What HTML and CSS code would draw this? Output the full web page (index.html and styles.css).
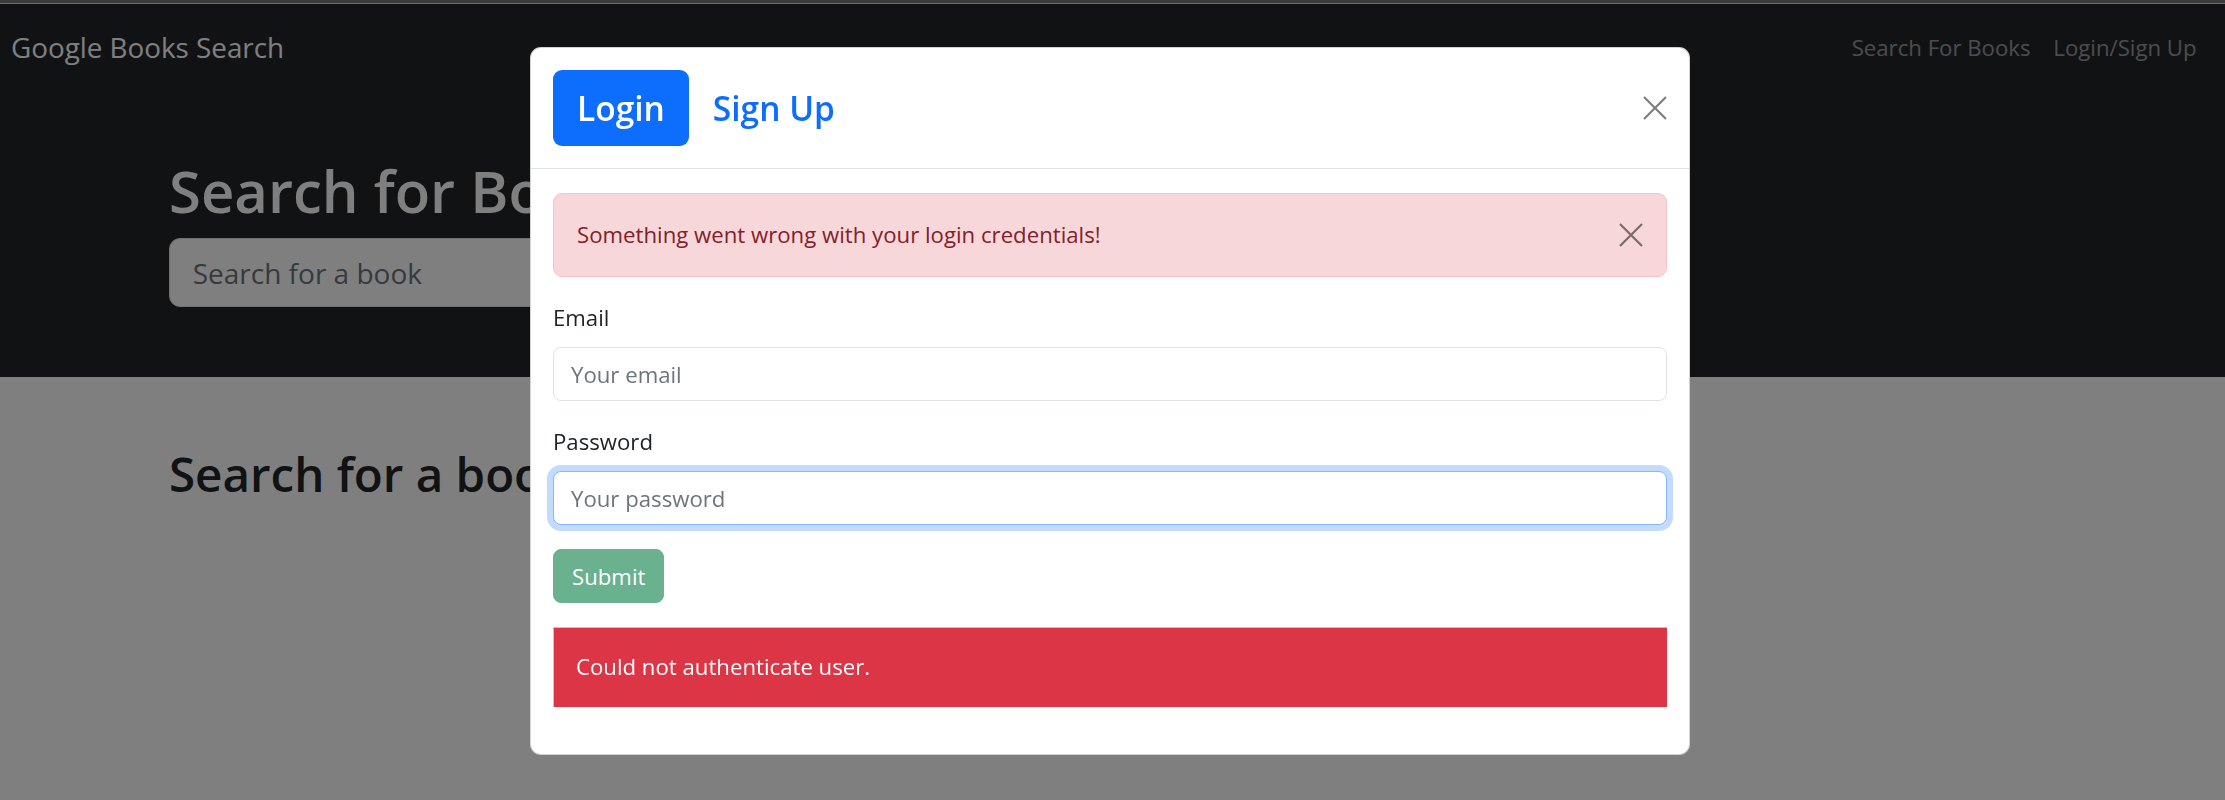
FILE: index.html
```html
<!DOCTYPE html>
<html lang="en">
<head>
<meta charset="utf-8">
<title>Google Books Search</title>
<link rel="stylesheet" href="styles.css">
</head>
<body>
<div class="chrome-strip"></div>
<nav class="navbar">
  <a class="brand" href="#">Google Books Search</a>
  <div class="nav-links">
    <a class="nav-link" href="#">Search For Books</a>
    <a class="nav-link" href="#">Login/Sign Up</a>
  </div>
</nav>
<section class="hero">
  <div class="container">
    <h1 class="hero-title">Search for Books!</h1>
    <form class="search-row">
      <input class="search-input" type="text" placeholder="Search for a book">
      <button class="search-btn" type="button">Submit Search</button>
    </form>
  </div>
</section>
<main class="container results">
  <h2 class="results-title">Search for a book to begin</h2>
</main>

<div class="backdrop"></div>
<div class="modal">
  <div class="modal-dialog">
    <div class="modal-header">
      <div class="tabs">
        <a class="tab active" href="#">Login</a>
        <a class="tab" href="#">Sign Up</a>
      </div>
      <button class="close-btn" type="button" aria-label="Close">
        <svg width="24" height="24" viewBox="0 0 24 24"><path d="M1 1 L23 23 M23 1 L1 23" stroke="#000" stroke-width="2.2" fill="none"/></svg>
      </button>
    </div>
    <div class="modal-body">
      <div class="alert-soft">
        Something went wrong with your login credentials!
        <button class="close-btn alert-close" type="button" aria-label="Close">
          <svg width="24" height="24" viewBox="0 0 24 24"><path d="M1 1 L23 23 M23 1 L1 23" stroke="#000" stroke-width="2.2" fill="none"/></svg>
        </button>
      </div>
      <form class="login-form">
        <div class="field">
          <label class="field-label" for="email">Email</label>
          <input class="form-control" id="email" type="text" placeholder="Your email">
        </div>
        <div class="field">
          <label class="field-label" for="password">Password</label>
          <input class="form-control focused" id="password" type="password" placeholder="Your password">
        </div>
        <button class="submit-btn" type="submit" disabled>Submit</button>
      </form>
      <div class="alert-solid">Could not authenticate user.</div>
    </div>
  </div>
</div>
</body>
</html>
```

FILE: styles.css
```css
* {
  box-sizing: border-box;
}

html,
body {
  margin: 0;
  padding: 0;
}

body {
  width: 2225px;
  height: 800px;
  overflow: hidden;
  background: #fff;
  color: #212529;
  font-family: "Open Sans", "Noto Sans", sans-serif;
  font-size: 22.2px;
  line-height: 1.5;
}

.chrome-strip {
  height: 4px;
  background: #787878;
  border-bottom: 1px solid #d4d4d4;
}

.navbar {
  height: 88px;
  background: #212529;
  display: flex;
  align-items: center;
  justify-content: space-between;
  padding: 0 17px 0 11px;
}

.brand {
  color: #fff;
  font-size: 27.8px;
  text-decoration: none;
}

.nav-links {
  display: flex;
}

.nav-link {
  color: rgba(255, 255, 255, 0.55);
  text-decoration: none;
  padding: 0 11.4px;
}

.container {
  width: 1887px;
  margin: 0 auto;
}

.hero {
  background: #212529;
  padding: 65px 0 70px;
}

.hero-title {
  margin: 0 0 13px;
  color: #fff;
  font-size: 58px;
  font-weight: 600;
  line-height: 68px;
}

.search-row {
  display: flex;
  gap: 12px;
  margin: 0;
}

.search-input {
  width: 1240px;
  height: 69px;
  padding: 0 22.7px;
  font-family: inherit;
  font-size: 28px;
  color: #212529;
  background: #fff;
  border: 1px solid #dee2e6;
  border-radius: 11px;
}

.search-input::placeholder {
  color: #6c757d;
}

.search-btn {
  height: 69px;
  padding: 0 22px;
  font-family: inherit;
  font-size: 28px;
  color: #fff;
  background: #198754;
  border: 1px solid #198754;
  border-radius: 11px;
}

.results {
  padding-top: 68px;
}

.results-title {
  margin: 0;
  font-size: 47.5px;
  font-weight: 600;
  line-height: 1.2;
}

.backdrop {
  position: fixed;
  inset: 0;
  background: rgba(0, 0, 0, 0.5);
  z-index: 10;
}

.modal {
  position: fixed;
  inset: 0;
  z-index: 11;
}

.modal-dialog {
  width: 1160px;
  margin: 47px 0 0 530px;
  background: #fff;
  border: 1px solid rgba(0, 0, 0, 0.175);
  border-radius: 11px;
}

.modal-header {
  height: 121px;
  display: flex;
  align-items: center;
  justify-content: space-between;
  padding: 22px;
  border-bottom: 1px solid #dee2e6;
}

.tabs {
  display: flex;
}

.tab {
  height: 76px;
  display: flex;
  align-items: center;
  padding: 0 24px;
  font-size: 33.5px;
  font-weight: 600;
  color: #0d6efd;
  text-decoration: none;
  border-radius: 9px;
}

.tab.active {
  background: #0d6efd;
  color: #fff;
}

.close-btn {
  width: 24px;
  height: 24px;
  padding: 0;
  border: 0;
  background: transparent;
  opacity: 0.5;
  display: flex;
}

.modal-body {
  padding: 24px 22px 23px;
}

.alert-soft {
  position: relative;
  padding: 23px 69px 23px 23px;
  line-height: 36px;
  color: #842029;
  background: #f8d7da;
  border: 1px solid #f5c2c7;
  border-radius: 9px;
  margin-bottom: 24px;
}

.alert-close {
  position: absolute;
  right: 23px;
  top: 50%;
  transform: translateY(-50%);
}

.login-form {
  margin: 0;
}

.field {
  margin-bottom: 24px;
}

.field-label {
  display: block;
  line-height: 34px;
  margin-bottom: 12px;
}

.form-control {
  display: block;
  width: 100%;
  height: 54px;
  padding: 0 17px;
  font-family: inherit;
  font-size: 22.2px;
  color: #212529;
  background: #fff;
  border: 1px solid #dee2e6;
  border-radius: 8px;
  outline: none;
}

.form-control::placeholder {
  color: #6c757d;
}

.form-control.focused {
  border-color: #86b7fe;
  box-shadow: 0 0 0 6px rgba(13, 110, 253, 0.25);
}

.submit-btn {
  display: block;
  height: 54px;
  padding: 0 18px;
  font-family: inherit;
  font-size: 22.2px;
  color: #fff;
  background: #198754;
  border: 1px solid #198754;
  border-radius: 8px;
  opacity: 0.65;
  margin-bottom: 24px;
}

.alert-solid {
  padding: 22px 23px 23px 22px;
  line-height: 34px;
  color: #fff;
  background: #dc3545;
  border-top: 1px solid #f1aeb5;
  border-left: 1px solid #f1aeb5;
  margin-bottom: 24px;
}
```
